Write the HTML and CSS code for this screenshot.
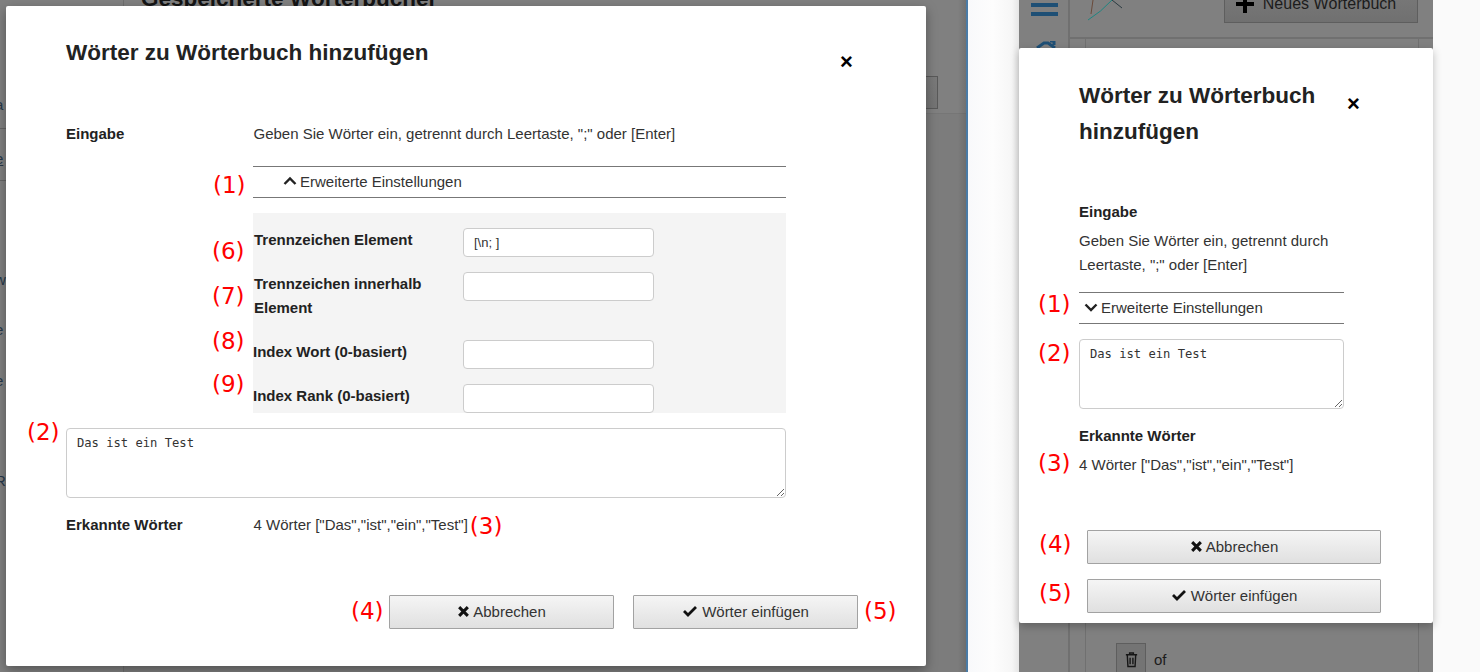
FILE: index.html
```html
<!DOCTYPE html>
<html lang="de">
<head>
<meta charset="utf-8">
<title>Wörter zu Wörterbuch hinzufügen</title>
<link rel="stylesheet" href="styles.css">
</head>
<body>
<div class="stage">
  <section class="desk">
    <div class="bg-lower"></div>
    <div class="bg-rail"></div>
    <h2 class="bg-title">Gespeicherte Wörterbücher</h2>
    <div class="bg-input"></div>
    <div class="bg-band"></div>
    <span class="bg-frag f1">a</span><span class="bg-frag f2">e</span><span class="bg-frag f3">w</span><span class="bg-frag f4">e</span><span class="bg-frag f5">e</span><span class="bg-frag f6">R</span>
    <div class="bg-line l1"></div><div class="bg-line l2"></div>
    <div class="modal modal-desk">
      <h3 class="title">Wörter zu Wörterbuch hinzufügen</h3>
      <span class="close">×</span>
      <div class="row-input">
        <b class="lab">Eingabe</b>
        <span class="hint">Geben Sie Wörter ein, getrennt durch Leertaste, ";" oder [Enter]</span>
      </div>
      <div class="adv-wrap">
        <span class="note n1">(1)</span>
        <div class="adv adv-open"><svg class="chev" viewBox="0 0 14 10"><path d="M1.5 8 7 2.500 12.500 8"/></svg>Erweiterte Einstellungen</div>
      </div>
      <div class="panel">
        <div class="prow p6"><span class="note">(6)</span><b class="plab">Trennzeichen Element</b><input class="field" value="[\n; ]"></div>
        <div class="prow p7"><span class="note">(7)</span><b class="plab">Trennzeichen innerhalb Element</b><input class="field"></div>
        <div class="prow p8"><span class="note">(8)</span><b class="plab">Index Wort (0-basiert)</b><input class="field"></div>
        <div class="prow p9"><span class="note">(9)</span><b class="plab">Index Rank (0-basiert)</b><input class="field"></div>
      </div>
      <div class="ta-wrap"><span class="note n2">(2)</span><textarea class="ta">Das ist ein Test</textarea></div>
      <div class="row-found">
        <b class="lab">Erkannte Wörter</b>
        <span class="hint">4 Wörter ["Das","ist","ein","Test"]</span><span class="note n3">(3)</span>
      </div>
      <div class="actions">
        <span class="note">(4)</span>
        <button class="btn"><svg class="ico" viewBox="0 0 12 12"><path d="M2 2 10 10M10 2 2 10"/></svg>Abbrechen</button>
        <button class="btn btn-ok"><svg class="ico ico-ok" viewBox="0 0 16 12"><path d="M2 6 6 10 14 2"/></svg>Wörter einfügen</button>
        <span class="note">(5)</span>
      </div>
    </div>
  </section>

  <div class="gutter"></div>

  <section class="phone">
    <div class="ph-top">
      <div class="ph-side">
        <div class="burger"><i></i><i></i></div>
        <svg class="ph-glyph" viewBox="0 0 20 8"><path d="M1 7 8 2h4l7 5M14 0h4v4"/></svg>
      </div>
      <div class="ph-head">
        <svg class="ph-logo" viewBox="0 0 40 24"><path class="lg1" d="M1 20Q14 12 25 0"/><path class="lg2" d="M6 0 4 14"/><path class="lg3" d="M25 0 35 8"/></svg>
        <button class="ph-new"><svg class="plus" viewBox="0 0 18 18"><path d="M9 0v18M0 9h18"/></svg>Neues Wörterbuch</button>
      </div>
      <div class="ph-card"></div>
    </div>
    <div class="ph-bottom">
      <button class="trash"><svg viewBox="0 0 16 18"><path d="M2 4h12M6 4V2h4v2M3.500 4l.7 12.500h7.600L12.500 4M6.500 7v7M9.500 7v7"/></svg></button>
      <span class="of">of</span>
    </div>
    <div class="modal modal-phone">
      <div class="ph-titlebar">
        <h3 class="title">Wörter zu Wörterbuch hinzufügen</h3>
        <span class="close">×</span>
      </div>
      <b class="lab block">Eingabe</b>
      <p class="hint para">Geben Sie Wörter ein, getrennt durch Leertaste, ";" oder [Enter]</p>
      <div class="ph-adv"><span class="note">(1)</span><div class="adv"><svg class="chev" viewBox="0 0 14 10"><path d="M1.5 2.500 7 8 12.500 2.500"/></svg>Erweiterte Einstellungen</div></div>
      <div class="ph-ta"><span class="note">(2)</span><textarea class="ta">Das ist ein Test</textarea></div>
      <b class="lab block found-lab">Erkannte Wörter</b>
      <div class="ph-found"><span class="note">(3)</span><span class="hint">4 Wörter ["Das","ist","ein","Test"]</span></div>
      <div class="ph-btn first"><span class="note">(4)</span><button class="btn"><svg class="ico" viewBox="0 0 12 12"><path d="M2 2 10 10M10 2 2 10"/></svg>Abbrechen</button></div>
      <div class="ph-btn"><span class="note">(5)</span><button class="btn"><svg class="ico ico-ok" viewBox="0 0 16 12"><path d="M2 6 6 10 14 2"/></svg>Wörter einfügen</button></div>
    </div>
  </section>
</div>
</body>
</html>
```

FILE: styles.css
```css
* { box-sizing: border-box; }
html, body { margin: 0; padding: 0; }
body { width: 1480px; height: 672px; overflow: hidden; background: #fafafa; font-family: "Liberation Sans", Arial, sans-serif; color: #333; font-size: 15px; }
.stage { position: relative; display: flex; width: 1480px; height: 672px; overflow: hidden; }

.desk { position: relative; width: 966px; height: 672px; background: #808080; flex: none; overflow: hidden; }
.desk::after { content: ""; position: absolute; right: 0; top: 0; bottom: 0; width: 8px; background: linear-gradient(to right, rgba(0,0,0,0), rgba(0,0,0,.12)); }
.gutter { width: 2px; background: #4a7ba6; flex: none; }
.bg-lower { position: absolute; left: 124px; right: 0; top: 114px; bottom: 0; background: #7c7c7c; }
.bg-rail { position: absolute; left: 123px; top: 0; bottom: 0; width: 1px; background: #6f6f6f; }
.bg-title { position: absolute; left: 141px; top: -13px; margin: 0; font-size: 22.500px; line-height: 24px; color: #141414; white-space: nowrap; }
.bg-input { position: absolute; left: 800px; top: 76px; width: 138px; height: 33px; border: 1px solid #595959; background: linear-gradient(#7a7a7a, #747474); }
.bg-band { position: absolute; left: 124px; right: 0; top: 113px; height: 1px; background: #767676; }
.bg-frag { position: absolute; left: -5px; font-size: 15px; color: #26384a; }
.f1 { top: 96px; } .f2 { top: 150px; text-decoration: underline; } .f3 { top: 271px; } .f4 { top: 321px; } .f5 { top: 372px; } .f6 { top: 472px; }
.bg-line { position: absolute; left: 0; width: 6px; height: 1px; background: #666; }
.l1 { top: 128px; } .l2 { top: 180px; }

.modal { position: absolute; background: #fff; border-radius: 2px; }
.note { color: #f00; font-family: "DejaVu Sans", sans-serif; font-size: 23px; line-height: 26px; white-space: nowrap; font-weight: 400; }
.lab { font-size: 15px; color: #222; font-weight: 700; }
.hint { font-size: 15px; color: #333; }
.close { font-weight: 700; font-size: 22px; line-height: 21px; color: #000; font-family: "Liberation Sans", sans-serif; }
.title { margin: 0; font-size: 22.500px; font-weight: 700; color: #222; line-height: 36px; }

.modal-desk { left: 6px; top: 6px; width: 920px; height: 660px; padding: 29px 140px 0 60px; display: flex; flex-direction: column; box-shadow: 0 4px 12px rgba(0,0,0,.35); }
.modal-desk .close { position: absolute; left: 834px; top: 45px; }
.row-input { display: flex; margin-top: 53px; height: 20px; align-items: center; padding-bottom: 2px; }
.row-input .lab, .row-found .lab { width: 187.500px; flex: none; }
.adv-wrap { position: relative; margin-left: 187px; margin-top: 22px; width: 533px; }
.adv { height: 32px; border-top: 1px solid #777; border-bottom: 1px solid #777; display: flex; align-items: center; padding: 0 0 2px 5px; font-size: 15px; color: #333; }
.adv-open { padding-left: 30px; }
.chev { width: 14px; height: 10px; margin-right: 3px; fill: none; stroke: #222; stroke-width: 2.400; }
.n1 { position: absolute; left: -40px; top: 6px; }
.panel { margin-left: 187px; margin-top: 15px; width: 533px; height: 200px; background: #f4f4f4; padding-top: 15px; }
.prow { position: relative; display: flex; align-items: flex-start; }
.prow .note { position: absolute; left: -41px; top: 10px; }
.plab { width: 210px; flex: none; color: #222; font-size: 15px; line-height: 24px; padding-left: 1px; }
.field { width: 191px; height: 29px; border: 1px solid #ccc; border-radius: 4px; background: #fff; font: 13px "Liberation Sans", sans-serif; color: #333; padding: 0 10px; outline: none; }
.p6 { height: 44px; } .p7 { height: 68px; } .p8 { height: 44px; } .p9 { height: 29px; }
.p7 .note { top: 11px; }
.p8 .plab, .p9 .plab { padding-left: 0; }
.p8 .note { top: -12px; }
.p9 .note { top: -13px; }
.ta-wrap { position: relative; margin-top: 15px; height: 70px; }
.ta { display: block; width: 100%; height: 70px; border: 1px solid #ccc; border-radius: 4px; font: 12.150px/14px "DejaVu Sans Mono", monospace; color: #333; padding: 7px 10px; margin: 0; background: #fff; outline: none; }
.n2 { position: absolute; left: -39px; top: -9px; }
.row-found { display: flex; align-items: center; height: 20px; margin-top: 17px; padding-bottom: 2px; }
.n3 { margin-left: 2px; margin-top: 3px; }
.actions { position: absolute; left: 345px; top: 589px; display: flex; align-items: center; }
.actions .note { width: 38px; margin-top: -3px; }
.actions .note:last-child { margin-left: 6px; width: auto; }
.btn { display: flex; align-items: center; justify-content: center; width: 225px; height: 34px; border: 1px solid #a2a2a2; border-radius: 1px; background: linear-gradient(#f5f5f5, #e0e0e0); font: 15px "Liberation Sans", sans-serif; color: #333; padding: 0 0 2px; }
.btn-ok { margin-left: 19px; }
.ico { width: 13px; height: 13px; margin-right: 3px; fill: none; stroke: #111; stroke-width: 2.800; }
.ico-ok { width: 16px; height: 12px; margin-right: 4px; }

.phone { position: absolute; left: 968px; top: 0; width: 512px; height: 672px; background: linear-gradient(to right, #f8f9fb 0, #fdfdfd 25px, #f6f6f6 44px, #e6e6e6 51px, #fafafa 51px); }
.ph-top { position: absolute; left: 51px; top: 0; width: 414px; height: 672px; background: #808080; }
.ph-side { position: absolute; left: 0; top: 0; width: 51px; height: 672px; border-right: 2px solid #707070; }
.burger { position: absolute; left: 12px; top: 3px; width: 27px; display: flex; flex-direction: column; gap: 5px; }
.burger i { display: block; height: 4px; background: #1e4f75; }
.ph-glyph { position: absolute; left: 17px; top: 41px; width: 20px; height: 8px; fill: none; stroke: #1e4f75; stroke-width: 3; }
.ph-head { position: absolute; left: 51px; right: 0; top: 0; height: 39px; border-bottom: 2px solid #707070; }
.ph-logo { position: absolute; left: 17px; top: 0; width: 40px; height: 24px; fill: none; stroke-width: 1; }
.lg1 { stroke: #1f8580; } .lg2 { stroke: #6a4a3a; } .lg3 { stroke: #2b3a40; }
.ph-new { position: absolute; left: 154px; top: -12px; width: 194px; height: 35px; border: 1px solid #5e5e5e; background: linear-gradient(#7a7a7a, #707070); font: 16px "Liberation Sans", sans-serif; color: #1c1c1c; display: flex; align-items: center; justify-content: center; padding: 0 10px 4px 0; }
.plus { width: 18px; height: 18px; margin-right: 9px; fill: none; stroke: #000; stroke-width: 4; }
.ph-card { position: absolute; left: 66px; width: 334px; top: 39px; bottom: 0; border-left: 1px solid #707070; border-right: 1px solid #707070; }
.ph-bottom { position: absolute; left: 148px; top: 643px; display: flex; align-items: center; gap: 8px; }
.trash { width: 30px; height: 32px; border: 1px solid #5e5e5e; background: #747474; padding: 0; display: flex; align-items: center; justify-content: center; }
.trash svg { width: 15px; height: 17px; fill: none; stroke: #161616; stroke-width: 1.500; }
.of { color: #1c1c1c; font-size: 15px; }

.modal-phone { left: 51px; top: 48px; width: 414px; height: 575px; padding: 0 89px 0 60px; box-shadow: 0 3px 8px rgba(0,0,0,.25); }
.ph-titlebar { position: relative; padding-top: 30px; width: 265px; }
.ph-titlebar .close { position: absolute; left: 268px; top: 45px; }
.block { display: block; }
.modal-phone .lab.block { margin-top: 52px; line-height: 20px; }
.para { margin: 7px 0 0; line-height: 24px; }
.ph-adv, .ph-ta, .ph-found { position: relative; }
.ph-adv { margin-top: 15px; }
.ph-adv .adv { width: 265px; }
.ph-adv .note { position: absolute; left: -41px; top: -1px; }
.ph-ta { margin-top: 15px; width: 265px; }
.ph-ta .note { position: absolute; left: -41px; top: 1px; }
.modal-phone .found-lab.block { margin-top: 17px; }
.ph-found { margin-top: 9px; line-height: 20px; }
.ph-found .note { position: absolute; left: -41px; top: -5px; }
.ph-btn { position: relative; margin-left: 8px; width: 294px; }
.ph-btn.first { margin-top: 55px; margin-bottom: 15px; }
.ph-btn .btn { width: 294px; }
.ph-btn .note { position: absolute; left: -48px; top: 1px; }
```
